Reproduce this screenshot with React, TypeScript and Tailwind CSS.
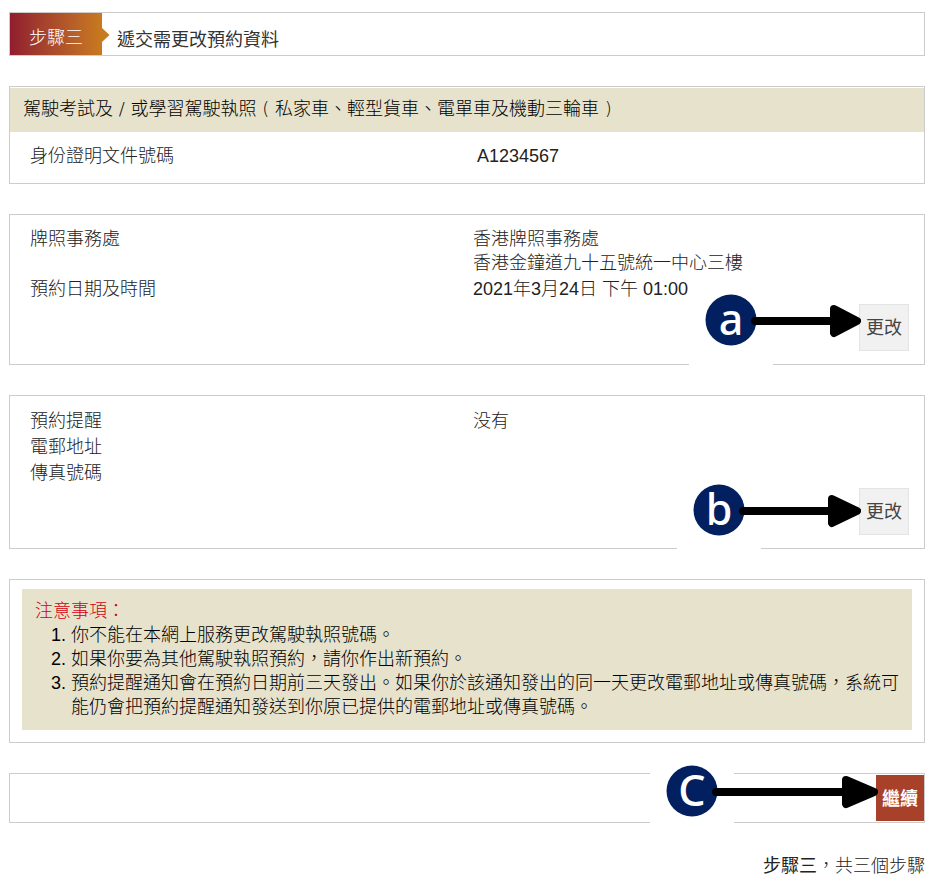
import { ReactNode } from 'react';
import { clsx } from 'clsx';

interface Field {
  label: string;
  value: string[];
}

const appointmentFields: Field[] = [
  { label: '牌照事務處', value: ['香港牌照事務處', '香港金鐘道九十五號統一中心三樓'] },
  { label: '預約日期及時間', value: ['2021年3月24日 下午 01:00'] },
];

const reminderFields: Field[] = [
  { label: '預約提醒', value: ['没有'] },
  { label: '電郵地址', value: [] },
  { label: '傳真號碼', value: [] },
];

const notes = [
  '你不能在本網上服務更改駕駛執照號碼。',
  '如果你要為其他駕駛執照預約，請你作出新預約。',
  '預約提醒通知會在預約日期前三天發出。如果你於該通知發出的同一天更改電郵地址或傳真號碼，系統可能仍會把預約提醒通知發送到你原已提供的電郵地址或傳真號碼。',
];

function Panel({ children, className }: { children: ReactNode; className?: string }) {
  return <section className={clsx('border border-[#cccccc]', className)}>{children}</section>;
}

function FieldList({ fields }: { fields: Field[] }) {
  return (
    <dl>
      {fields.map((field) => (
        <div key={field.label} className="grid grid-cols-2 pt-0.5">
          <dt className="pl-5">{field.label}</dt>
          <dd className="pl-1.5">
            {field.value.map((line) => (
              <div key={line}>{line}</div>
            ))}
          </dd>
        </div>
      ))}
    </dl>
  );
}

interface CalloutProps {
  letter: string;
  length: number;
  head: number;
  className?: string;
}

// Lettered marker with an arrow that ends on the control next to it
function Callout({ letter, length, head, className }: CalloutProps) {
  return (
    <svg
      className={clsx('pointer-events-none absolute right-full -mr-0.5 max-w-none', className)}
      width={length}
      height={96}
      viewBox={`0 0 ${length} 96`}
      aria-hidden="true"
    >
      <rect width="84" height="96" fill="#fff" />
      <circle cx="42" cy="48" r="25.5" fill="#02205f" />
      <text
        x="42"
        y="63"
        textAnchor="middle"
        fill="#fff"
        className="font-['Noto_Sans',sans-serif] text-[43px] font-medium"
      >
        {letter}
      </text>
      <path d={`M66 49H${length - 20}`} stroke="#000" strokeWidth="8" strokeLinecap="round" />
      <path
        d={`M${length - head + 4} 37L${length - 4} 49L${length - head + 4} 61Z`}
        fill="#000"
        stroke="#000"
        strokeWidth="8"
        strokeLinejoin="round"
      />
    </svg>
  );
}

function EditRow({ children, label }: { children: ReactNode; label: string }) {
  return (
    <div className="mt-[3px] flex justify-end pr-[15px]">
      <div className="relative">
        <button
          type="button"
          aria-label={`更改${label}`}
          className="block border border-[#e4e4e4] bg-[#f1f1f1] px-[6px] pt-[11px] pb-[10px] font-normal text-[#444444]"
        >
          更改
        </button>
        {children}
      </div>
    </div>
  );
}

export default function App() {
  return (
    <main className="flex min-h-screen flex-col gap-[30px] bg-white pt-3 pr-2 pb-2 pl-[9px] font-['Liberation_Sans','Noto_Sans_CJK_TC',sans-serif] text-[18px] leading-6 font-light text-[#222222]">
      <Panel className="flex">
        <div className="relative bg-linear-to-r from-[#901c2d] to-[#c87a1e] pt-[13px] pr-[19px] pb-[5px] pl-[19px] text-white">
          步驟三
          <svg
            className="absolute top-[14px] left-full"
            width="8"
            height="16"
            viewBox="0 0 8 16"
            aria-hidden="true"
          >
            <path d="M0 1L7.5 8L0 15Z" fill="#c87a1e" />
          </svg>
        </div>
        <h1 className="pt-[15px] pl-[15px] font-normal text-[#333333]">遞交需更改預約資料</h1>
      </Panel>

      <Panel className="pt-px">
        <h2 className="bg-[#e7e2cc] pt-[9px] pr-[13px] pb-[11px] pl-[13px] font-['DejaVu_Sans','Noto_Sans_CJK_TC',sans-serif] text-black">
          駕駛考試及 / 或學習駕駛執照 ( 私家車、輕型貨車、電單車及機動三輪車 )
        </h2>
        <dl className="grid grid-cols-2 pt-3 pb-[15px]">
          <dt className="pl-5">身份證明文件號碼</dt>
          <dd className="pl-[10px]">A1234567</dd>
        </dl>
      </Panel>

      <Panel className="pt-[10px] pb-[13px]">
        <FieldList fields={appointmentFields} />
        <EditRow label="預約">
          <Callout letter="a" length={172} head={31} className="-top-8" />
        </EditRow>
      </Panel>

      <Panel className="pt-[11px] pb-[13px]">
        <FieldList fields={reminderFields} />
        <EditRow label="預約提醒">
          <Callout letter="b" length={184} head={33} className="-top-[26px]" />
        </EditRow>
      </Panel>

      <Panel className="px-3 pt-[9px] pb-3">
        <div className="bg-[#e7e2cc] pt-[10px] pr-[10px] pb-[11px] pl-[13px] text-black">
          <h2 className="text-[#d0000f]">注意事項：</h2>
          <ol className="list-decimal pl-9">
            {notes.map((note) => (
              <li key={note}>{note}</li>
            ))}
          </ol>
        </div>
      </Panel>

      <Panel className="flex justify-end py-px">
        <div className="relative">
          <button
            type="button"
            className="block bg-[#a8412a] px-1.5 pt-3 pb-[10px] font-bold text-white"
          >
            繼續
          </button>
          <Callout letter="C" length={228} head={36} className="-top-8" />
        </div>
      </Panel>

      <p className="pt-px text-right">
        <span className="font-normal">步驟三</span>，共三個步驟
      </p>
    </main>
  );
}
